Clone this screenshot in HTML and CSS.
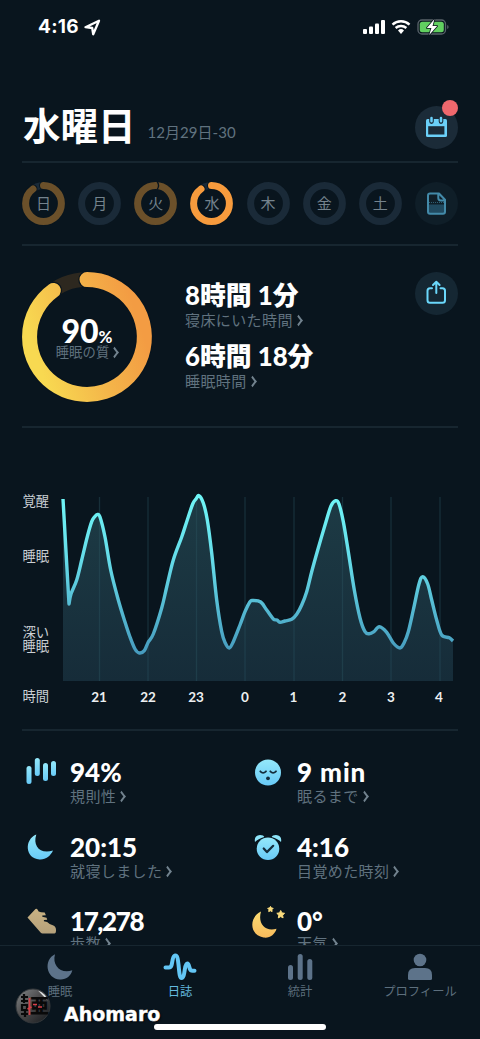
FILE: index.html
```html
<!DOCTYPE html>
<html lang="ja">
<head>
<meta charset="utf-8">
<title>睡眠日誌</title>
<link rel="stylesheet" href="styles.css">
</head>
<body>
<div class="phone">
  <header class="top">
    <div class="status">
      <div class="status-left"><span class="clock">4:16</span>
        <svg width="17" height="17" viewBox="0 0 17 17"><path d="M1.5 8.2 15 1.7 9.2 15.3 8.2 9Z" fill="none" stroke="#fff" stroke-width="2.300" stroke-linejoin="round"/></svg>
      </div>
      <svg width="88" height="18" viewBox="0 0 88 18">
        <g fill="#fff"><rect x="1" y="11" width="4" height="5" rx="1"/><rect x="7" y="8.5" width="4" height="7.5" rx="1"/><rect x="13" y="5.500" width="4" height="10.500" rx="1"/><rect x="19" y="2" width="4" height="14" rx="1"/></g>
        <g fill="none" stroke="#fff" stroke-width="2.400"><path d="M30.500 6.600a12.500 12.500 0 0 1 17 0"/><path d="M33.600 10a8.300 8.300 0 0 1 10.800 0"/></g>
        <path d="M36 12.400a4.600 4.600 0 0 1 6 0L39 16Z" fill="#fff"/>
        <rect x="56" y="2" width="27.500" height="14" rx="4" fill="none" stroke="#59636a" stroke-width="1.300"/>
        <rect x="57.800" y="3.700" width="24" height="10.600" rx="2.500" fill="#61cf60"/>
        <path d="M85.200 7v4q1.400-.6 1.400-2t-1.400-2" fill="#59636a"/>
        <path d="M72.500 1 64.800 10h4.600l-2.200 7 8-9h-4.700Z" fill="#fff" stroke="#09141d" stroke-width="1.600" paint-order="stroke" stroke-linejoin="round"/>
      </svg>
    </div>
    <div class="title-row">
      <h1>水曜日</h1><span class="date">12月29日-30</span>
      <button class="round calendar">
        <svg width="43" height="43" viewBox="0 0 43 43"><path d="M12.500 13h18q1.500 0 1.500 1.500v15q0 1.500-1.500 1.500h-18q-1.500 0-1.500-1.500v-15q0-1.500 1.500-1.500Z" fill="#6bd0f8"/><rect x="13.200" y="20.200" width="16.200" height="8.300" fill="#1b2b38"/><path d="M16.500 11.800v3.800M26 11.800v3.800" stroke="#1b2b38" stroke-width="4.600" stroke-linecap="round"/><path d="M16.500 12v3.300M26 12v3.300" stroke="#6bd0f8" stroke-width="2.500" stroke-linecap="round"/></svg>
        <i class="badge"></i>
      </button>
    </div>
  </header>

  <nav class="week">
    <div class="day"><svg viewBox="0 0 43 43"><circle class="track" cx="21.500" cy="21.500" r="17.900"/><circle class="halo" pathLength="100" stroke-dasharray="90 100" cx="21.500" cy="21.500" r="17.900"/><circle class="arc dim" pathLength="100" stroke-dasharray="90 100" cx="21.500" cy="21.500" r="17.900"/></svg><span>日</span></div>
    <div class="day"><svg viewBox="0 0 43 43"><circle class="track" cx="21.500" cy="21.500" r="17.900"/></svg><span>月</span></div>
    <div class="day"><svg viewBox="0 0 43 43"><circle class="arc dim flat" cx="21.500" cy="21.500" r="17.900"/><path d="M23.300 0q2.600 3.500-.2 7.500" fill="none" stroke="#09141d" stroke-width="1.300"/></svg><span>火</span></div>
    <div class="day"><svg viewBox="0 0 43 43"><circle class="track" cx="21.500" cy="21.500" r="17.900"/><circle class="halo" pathLength="100" stroke-dasharray="90 100" cx="21.500" cy="21.500" r="17.900"/><circle class="arc" pathLength="100" stroke-dasharray="90 100" cx="21.500" cy="21.500" r="17.900"/></svg><span>水</span></div>
    <div class="day"><svg viewBox="0 0 43 43"><circle class="track" cx="21.500" cy="21.500" r="17.900"/></svg><span>木</span></div>
    <div class="day"><svg viewBox="0 0 43 43"><circle class="track" cx="21.500" cy="21.500" r="17.900"/></svg><span>金</span></div>
    <div class="day"><svg viewBox="0 0 43 43"><circle class="track" cx="21.500" cy="21.500" r="17.900"/></svg><span>土</span></div>
    <button class="round faint"><svg width="43" height="43" viewBox="0 0 43 43"><path d="M13 22.500h17v7q0 2-2 2H15q-2 0-2-2Z" fill="#214a60"/><path d="M15 11.500h9l6 6.200v12q0 2-2 2H15q-2 0-2-2v-16q0-2.200 2-2.200ZM23.300 12v4q0 2.400 2.400 2.400h4" fill="none" stroke="#438aa9" stroke-width="2" stroke-linejoin="round"/><path d="M14 20.500h15" stroke="#438aa9" stroke-opacity=".6" stroke-dasharray="1 1"/></svg></button>
  </nav>

  <section class="summary">
    <div class="quality">
      <svg viewBox="0 0 130 130"><defs><linearGradient id="gold" x1=".05" y1=".65" x2=".95" y2=".35"><stop stop-color="#f8d951"/><stop offset=".5" stop-color="#f4b74a"/><stop offset="1" stop-color="#f39c43"/></linearGradient></defs>
        <circle cx="65" cy="65" r="57.400" fill="none" stroke="#2d281f" stroke-width="14.500"/>
        <path d="M65 7.600A57.400 57.400 0 1 1 31.300 18.500" fill="none" stroke="#09141d" stroke-width="17.500" stroke-linecap="round"/>
        <path d="M65 7.600A57.400 57.400 0 1 1 31.300 18.500" fill="none" stroke="url(#gold)" stroke-width="15" stroke-linecap="round"/></svg>
      <div class="quality-text"><div class="percent">90<small>%</small></div><div class="link">睡眠の質<i class="chev"></i></div></div>
    </div>
    <div class="times">
      <strong>8時間 1分</strong><div class="link">寝床にいた時間<i class="chev"></i></div>
      <strong>6時間 18分</strong><div class="link">睡眠時間<i class="chev"></i></div>
    </div>
    <button class="round"><svg width="43" height="43" viewBox="0 0 43 43"><path d="M17 16.300h-2q-2.500 0-2.500 2.500v9.500q0 2.500 2.500 2.500h12.500q2.500 0 2.500-2.500v-9.500q0-2.500-2.500-2.500h-2M21.300 21V10.800M18 13l3.300-3.200L24.600 13" fill="none" stroke="#6bd8fb" stroke-width="2" stroke-linecap="round" stroke-linejoin="round"/></svg></button>
  </section>

  <section class="chart">
    <svg width="480" height="301" viewBox="0 428 480 301">
      <defs>
        <linearGradient id="line" gradientUnits="userSpaceOnUse" x1="0" y1="495" x2="0" y2="655"><stop stop-color="#6ff6f7"/><stop offset=".4" stop-color="#65dce9"/><stop offset="1" stop-color="#469abd"/></linearGradient>
        <linearGradient id="area" gradientUnits="userSpaceOnUse" x1="0" y1="495" x2="0" y2="681"><stop stop-color="#1d3b45"/><stop offset="1" stop-color="#162c39"/></linearGradient>
      </defs>
      <path id="fill" fill="url(#area)"/>
      <path d="M99.500 497V681M148 497V681M196.500 497V681M245 497V681M294 497V681M342.500 497V681M391 497V681M440 497V681" stroke="#2c5460" stroke-opacity=".42" stroke-width="1.300"/>
      <path id="curve" fill="none" stroke="url(#line)" stroke-width="3.400" stroke-linejoin="round"/>
      <g class="ylabels"><text x="22.500" y="506">覚醒</text><text x="22.500" y="561">睡眠</text><text><tspan x="22.500" y="637">深い</tspan><tspan x="22.500" y="651">睡眠</tspan></text><text x="22.500" y="701">時間</text></g>
      <g class="xlabels"><text x="99" y="701.500">21</text><text x="148" y="701.500">22</text><text x="196" y="701.500">23</text><text x="245" y="701.500">0</text><text x="293.500" y="701.500">1</text><text x="342.500" y="701.500">2</text><text x="391" y="701.500">3</text><text x="439" y="701.500">4</text></g>
    </svg>
  </section>

  <section class="metrics">
    <div class="metric"><svg viewBox="0 0 34 34"><defs><linearGradient id="sky" x1="0" y1="0" x2="0" y2="1"><stop stop-color="#94e8fa"/><stop offset="1" stop-color="#68caf7"/></linearGradient></defs><g fill="url(#sky)"><rect x="4.500" y="13" width="5" height="18" rx="2.500"/><rect x="12.800" y="5" width="5" height="18" rx="2.500"/><rect x="21" y="10" width="5" height="18" rx="2.500"/><rect x="29" y="8" width="5" height="15" rx="2.500"/></g></svg><div><b>94%</b><div class="link">規則性<i class="chev"></i></div></div></div>
    <div class="metric"><svg viewBox="0 0 34 34"><circle cx="19" cy="19.500" r="13" fill="url(#sky)"/><path d="M11.300 18.300q2.700 3 5.700 0M21.300 18.300q2.700 3 5.700 0" fill="none" stroke="#142d3c" stroke-width="1.800" stroke-linecap="round"/><circle cx="19" cy="25.300" r="1.900" fill="#142d3c"/></svg><div><b class="loose">9 min</b><div class="link">眠るまで<i class="chev"></i></div></div></div>
    <div class="metric"><svg viewBox="0 0 34 34"><path d="M14.300 6.500C2 11.500 3 30.500 17.500 31.500c6 .5 11-3.500 13.500-9C18 26.500 10.500 18 14.300 6.500Z" fill="url(#sky)"/></svg><div><b>20:15</b><div class="link">就寝しました<i class="chev"></i></div></div></div>
    <div class="metric"><svg viewBox="0 0 34 34"><path d="M6 14q-1.300-6.500 5-7 3.800 0 4.300 2Q9 11 6 14M32 14q1.300-6.500-5-7-3.800 0-4.300 2Q29 11 32 14" fill="#8ee5fa"/><circle cx="19" cy="20.800" r="11.300" fill="url(#sky)"/><path d="m14.700 20.500 3.200 3.600 6.300-6.300" fill="none" stroke="#142d3c" stroke-width="2.200" stroke-linecap="round" stroke-linejoin="round"/></svg><div><b>4:16</b><div class="link">目覚めた時刻<i class="chev"></i></div></div></div>
    <div class="metric"><svg viewBox="0 0 34 34"><defs><linearGradient id="shoe" x1="0" y1="0" x2="0" y2="1"><stop stop-color="#c9b283"/><stop offset="1" stop-color="#b5a17b"/></linearGradient></defs><path transform="translate(0 1)" d="m5.500 14.500 8-8.500q1.300-.8 2 .5.500 2.500 3.500 2.700l3.700.3 1.200 2.700-3.600.3v1.200l4.300 1 .6 2-3.300.3v1.300l3.200.7q2.400 2.500 5.700 3.200 3.500 1.200 3.200 5.300 0 3-1.600 3H20.500q-1 0-1.700-.8Z" fill="url(#shoe)"/></svg><div><b class="tight">17,278</b><div class="link">歩数<i class="chev"></i></div></div></div>
    <div class="metric"><svg viewBox="0 0 34 34"><defs><linearGradient id="moon" x1="0" y1="0" x2="0" y2="1"><stop stop-color="#fbdc73"/><stop offset="1" stop-color="#f8bb5c"/></linearGradient></defs><path d="M12 9.500C0 15 0 33 14.500 35.500c6 1 11.500-3 13-8.800C16 30 8.500 21.500 12 9.500Z" fill="url(#moon)"/><path d="m21.500 4.400.9 1.600 1.800.3-1.300 1.400.2 1.900-1.700-.8-1.700.8.3-1.900-1.300-1.400 1.800-.3ZM31.700 8.500l1.200 2.400 2.700.4-2 1.900.5 2.700-2.400-1.300-2.400 1.300.5-2.700-2-1.900 2.700-.4Z" fill="#fbdc7e" stroke="#fbdc7e" stroke-linejoin="round"/></svg><div><b>0°</b><div class="link">天気<i class="chev"></i></div></div></div>
  </section>

  <nav class="tabs">
    <a><svg width="34" height="28" viewBox="0 0 34 28"><path d="M12 1.200C.5 6.500 2.500 25.500 17 26.500c6 .4 11-3.500 12.300-9.200C18 21.500 8.800 12.500 12 1.200Z" fill="#5d738a"/></svg>睡眠</a>
    <a class="active"><svg width="34" height="28" viewBox="0 0 34 28"><path d="M2.500 14.500h3.300q2.200 0 2.800-2.500C9.500 8 10 2.500 12.300 2.500S15 7 15.600 12.500c.7 7 1 12.500 3 12.500s2.500-4 3.200-8.500c.5-3.500 1.200-6 2.600-6s1.500 2.500 2.300 5Q27.500 17.700 29.500 17.700h2" fill="none" stroke="#63c6f5" stroke-width="4" stroke-linecap="round" stroke-linejoin="round"/></svg>日誌</a>
    <a><svg width="34" height="28" viewBox="0 0 34 28"><g fill="#5d738a"><rect x="5" y="12" width="5" height="15" rx="2.500"/><rect x="14.700" y="1" width="5" height="26" rx="2.500"/><rect x="24.300" y="6" width="5" height="21" rx="2.500"/></g></svg>統計</a>
    <a><svg width="34" height="28" viewBox="0 0 34 28"><circle cx="17" cy="7" r="6.300" fill="#5d738a"/><path d="M5 25.500V22q0-7 7-7h10q7 0 7 7v3.500q0 1.500-1.500 1.500h-21Q5 27 5 25.500Z" fill="#5d738a"/></svg>プロフィール</a>
  </nav>
  <i class="home"></i>
  <div class="watermark">
    <svg width="38" height="38" viewBox="0 0 38 38"><defs><linearGradient id="metal" x1="0" y1="0" x2="1" y2="1"><stop stop-color="#85898b"/><stop offset=".45" stop-color="#4c4b4c"/><stop offset="1" stop-color="#15181b"/></linearGradient></defs><circle cx="19" cy="19" r="17" fill="url(#metal)" stroke="#34383b"/><path d="M24 3.500q8 3 9.500 10Z" fill="#dce0e0"/><text class="seal" x="16" y="26">亜</text><path d="M7 10h7M10 7v9M7 14h7M8 18h5v5H8ZM7 27h7M11 24v6" fill="none" stroke="#090909" stroke-width="2.200"/><path d="M15.500 11v17M13.500 22l4-2M19 17.500h4M24 20h4" stroke="#d63f47" stroke-width="1.700" fill="none"/></svg>
    <span>Ahomaro</span>
  </div>
</div>
<script src="chart.js"></script>
</body>
</html>
```
FILE: styles.css
```css
* { box-sizing: border-box; }
body { margin: 0; background: #09151e; color: #fff; font-family: Lato, "Noto Sans CJK JP", sans-serif; }
.phone { position: relative; width: 480px; height: 1039px; overflow: hidden; display: flex; flex-direction: column; }
svg { display: block; flex: none; overflow: visible; }
.top, .week, .summary, .chart { flex: none; position: relative; }
.top::after, .week::after, .summary::after, .chart::after { content: ""; position: absolute; left: 22px; right: 22px; bottom: 0; height: 2px; background: #172630; }
.top { height: 163px; }
.status { height: 54px; padding: 0 30px 0 38px; display: flex; justify-content: space-between; align-items: center; }
.status-left { display: flex; align-items: center; gap: 5px; }
.clock { font: 700 19px/20px Inter, sans-serif; letter-spacing: .3px; }
.title-row { display: flex; height: 72px; margin-top: 36px; padding: 0 22px; }
h1 { margin: -2px 0 0 1px; font: 700 37.500px/72px "Noto Sans CJK JP", sans-serif; }
.date { margin: 6px 0 0 12px; font-size: 15px; line-height: 72px; letter-spacing: .05px; color: #60727f; }
.round { position: relative; flex: none; width: 43px; height: 43px; padding: 0; border: 0; border-radius: 50%; background: #152733; }
.calendar { margin: 16px 0 0 auto; background: #1b2b38; }
.badge { position: absolute; right: 0; top: -6px; width: 16px; height: 16px; border-radius: 50%; background: #ef686d; }
.week { height: 83px; padding: 19px 22px 0; display: flex; justify-content: space-between; }
.day { display: grid; width: 43px; height: 43px; place-items: center; font-size: 15px; line-height: 22px; color: #74838d; }
.day svg, .day span { grid-area: 1 / 1; }
.day span { margin-top: -2px; }
.day svg { width: 43px; height: 43px; }
.day circle { fill: none; stroke-width: 7; stroke-linecap: round; }
.day .track { stroke: #1a2a38; }
.day .arc { stroke: #f79b3d; }
.day .dim { stroke: #6b502a; }
.day .halo { stroke: #09151e; stroke-width: 9; }
.day .halo, .day .arc { transform: rotate(-90deg); transform-origin: center; }
.faint { background: #0f1e28; }
.summary { height: 182px; padding: 26px 22px 0; display: flex; }
.quality { display: grid; width: 130px; height: 130px; place-items: center; }
.quality > * { grid-area: 1 / 1; }
.quality > svg { width: 130px; height: 130px; }
.quality-text { padding-top: 7px; text-align: center; }
.percent { height: 23px; font-size: 32px; font-weight: 900; line-height: 22px; }
.percent small { font-size: 17px; font-weight: 700; line-height: 1; }
.link { display: flex; align-items: center; color: #60727f; font-size: 15px; line-height: 19px; white-space: nowrap; letter-spacing: .4px; }
.quality .link { font-size: 13.300px; line-height: 19px; letter-spacing: .1px; }
.chev { width: 7px; height: 7px; margin-left: 2px; border: solid #71828e; border-width: 2px 2px 0 0; transform: rotate(45deg) skew(8deg, 8deg); }
.quality .chev { margin-left: 2px; }
.times { padding: 8px 0 0 33px; }
.times strong { display: block; font-size: 25.800px; line-height: 30px; font-weight: 900; }
.times .link { height: 31px; align-items: flex-start; line-height: 20px; }
.times .chev { margin-top: 7px; }
.summary > .round { margin-left: auto; }
.chart { height: 303px; }
.ylabels text { fill: #cbd0d5; font: 400 13.300px "Noto Sans CJK JP", sans-serif; }
.xlabels text { fill: #eceff1; font: 700 13.500px Lato, sans-serif; text-anchor: middle; }
.metrics { flex: none; height: 214px; padding: 22px 22px 0; overflow: hidden; display: grid; grid-template-columns: 227px 1fr; grid-template-rows: 75px 73.500px 75px; }
.metric { display: flex; gap: 14px; }
.metric svg { width: 34px; height: 34px; }
.metric b { display: block; height: 35px; font-size: 26px; line-height: 38px; font-weight: 900; }
.metric .loose { letter-spacing: .9px; }
.metric .tight { letter-spacing: -1.400px; }
.metric .link { line-height: 16px; }
.metric:nth-child(n + 5) .link { margin-top: -1.500px; }
.tabs { flex: none; height: 94px; border-top: 1px solid #172630; display: grid; grid-template-columns: repeat(4, 1fr); }
.tabs a { display: flex; flex-direction: column; align-items: center; padding-top: 7px; gap: 1px; color: #5d6f7d; font-size: 12.300px; line-height: 19px; }
.tabs .active { color: #63b9df; }
.home { position: absolute; left: 154px; top: 1024px; width: 172px; height: 6px; border-radius: 3px; background: #fff; }
.watermark { position: absolute; left: 14px; top: 987px; display: flex; align-items: flex-start; gap: 12px; font: 700 19px/38px "DejaVu Sans", sans-serif; text-shadow: 1px 1px 2px #000; -webkit-text-stroke: .4px #fff; }
.watermark span { padding-top: 8px; }
.seal { font: 900 19px "Noto Sans CJK JP", sans-serif; fill: #090909; text-shadow: none; -webkit-text-stroke: 0; }
```
FILE: chart.js
```js
const points = [[63,499],[69,604],[71,594],[76.7,580],[81.7,560],[87.3,536.7],[91.7,521.7],[94.5,517],[97.3,514.5],[100,517],[105,537],[110.7,570],[118.3,600],[125,622],[130,637],[135,649],[139.3,653],[144.3,650.7],[148.3,642],[153.3,634],[161.7,608],[166.7,587],[173.3,560],[181.7,537],[186.7,521.7],[192.7,504],[196,499],[199,495.7],[203.3,503],[207.3,520],[211.7,553],[216.7,600],[221.7,631.7],[225.3,643],[229.3,648],[233.3,641.7],[240,625],[245,611.7],[250,601.7],[253,600.5],[260.7,602],[266.7,610],[273.3,619],[277,620],[280,622.3],[285,621],[291.7,619.3],[296.7,614.3],[301.7,605],[306.7,591.7],[311.7,571.7],[318.3,548],[326,521.7],[331,506],[335.7,500.7],[339,504],[343.3,521.7],[348.3,551.7],[354.3,590],[360,618],[365,631.7],[369.3,633.7],[374,631.7],[379.3,626.7],[386.7,632.3],[393.3,643],[400,648],[404,643],[408.3,631.7],[413.3,610],[419,584],[422.7,576.7],[427.7,584],[431.7,600],[436.7,620],[441.7,635],[449.3,637.7],[453,641]];
let d = `M${points[0]}L${points[1]}`;
// Catmull-Rom segments after the initial straight drop
for (let i = 1; i < points.length - 1; i++) {
  const a = i === 1 ? points[1] : points[i - 1];
  const b = points[i], c = points[i + 1], e = points[i + 2] || c;
  d += `C${b[0] + (c[0] - a[0]) / 6} ${b[1] + (c[1] - a[1]) / 6} ${c[0] - (e[0] - b[0]) / 6} ${c[1] - (e[1] - b[1]) / 6} ${c[0]} ${c[1]}`;
}
document.getElementById("curve").setAttribute("d", d);
document.getElementById("fill").setAttribute("d", d + "V681H63Z");
```
